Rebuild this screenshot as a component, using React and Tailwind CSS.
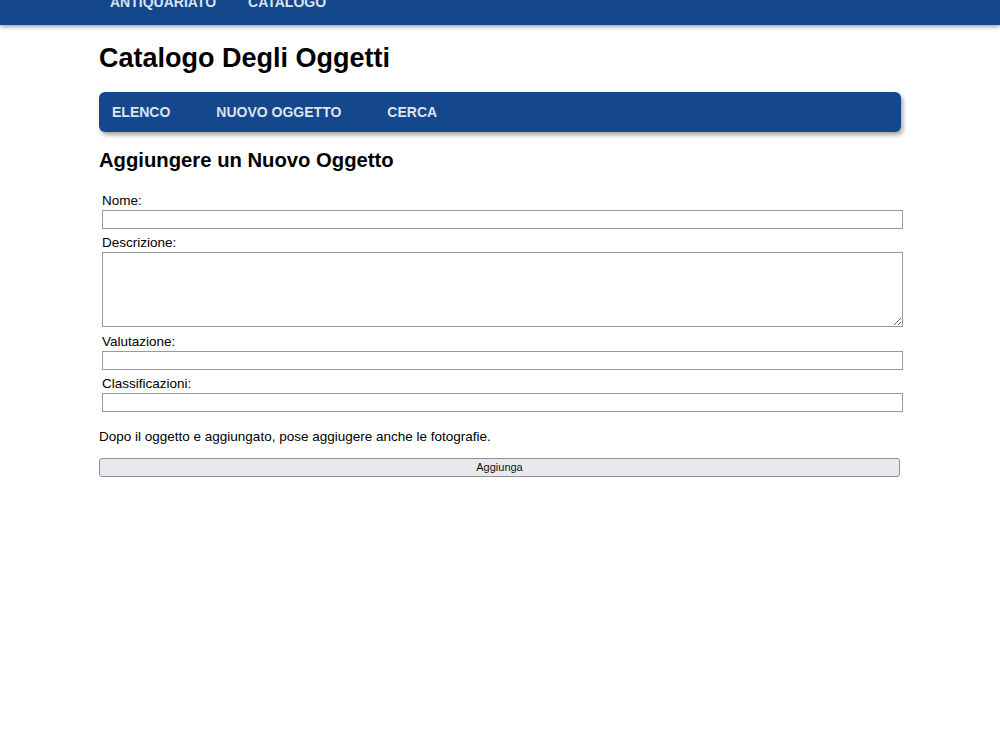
import React from 'react';

const fields = [
  { label: 'Nome:', type: 'input' },
  { label: 'Descrizione:', type: 'textarea' },
  { label: 'Valutazione:', type: 'input' },
  { label: 'Classificazioni:', type: 'input' },
];

const App = () => {
  return (
    <div className="min-h-[750px] w-full bg-white text-black font-['Liberation_Sans',Arial,sans-serif]">
      {/* Top bar (page scrolled, only lower part visible) */}
      <div className="h-[25px] w-full overflow-hidden bg-[#14478c] shadow-[0_2px_4px_rgba(0,0,0,0.35)] relative z-10">
        <div className="flex gap-[32px] pl-[110px] -mt-[6px] text-[14px] leading-[17px] font-bold text-[#dbe4ef] uppercase">
          <span>Antiquariato</span>
          <span>Catalogo</span>
        </div>
      </div>

      <div className="w-[802px] mx-auto">
        <h1 className="mt-[18px] text-[27px] leading-[30px] font-bold">Catalogo Degli Oggetti</h1>

        {/* Section nav */}
        <nav className="mt-[19px] h-[40px] flex items-center gap-[46px] pl-[13px] bg-[#14478c] rounded-[6px] shadow-[2px_3px_4px_rgba(0,0,0,0.35)] text-[14px] font-bold text-[#dbe4ef]">
          <span>ELENCO</span>
          <span>NUOVO OGGETTO</span>
          <span>CERCA</span>
        </nav>

        <h2 className="mt-[17px] text-[20.25px] leading-[23px] font-bold">Aggiungere un Nuovo Oggetto</h2>

        {/* Form */}
        <form className="mt-[21px] pl-[3px] flex flex-col text-[13.5px] leading-[15px]">
          {fields.map((f, i) => (
            <div key={f.label} className={i === 0 ? '' : i === 2 ? 'mt-[7px]' : 'mt-[6px]'}>
              <label className="block">{f.label}</label>
              {f.type === 'textarea' ? (
                <textarea className="block mt-[2px] w-[801px] h-[75px] border border-[#9a9a9a] bg-white" />
              ) : (
                <input type="text" className="block mt-[2px] w-[801px] h-[19px] border border-[#9a9a9a] bg-white" />
              )}
            </div>
          ))}
        </form>

        <p className="mt-[17px] text-[13.5px] leading-[15px]">
          Dopo il oggetto e aggiungato, pose aggiugere anche le fotografie.
        </p>

        <button type="button" className="mt-[14px] w-[801px] h-[19px] flex items-center justify-center bg-[#e9e9ed] border border-[#8f8f9d] rounded-[3px] text-[11px] leading-[13px] text-[#111]">
          Aggiunga
        </button>
      </div>
    </div>
  );
};

export default App;
